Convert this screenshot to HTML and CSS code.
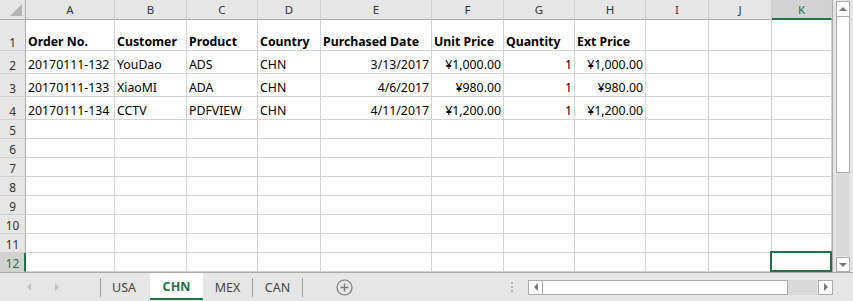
FILE: index.html
```html
<!DOCTYPE html>
<html>
<head>
<meta charset="utf-8">
<link rel="stylesheet" href="styles.css">
</head>
<body>
<div class="app">
  <div class="main">
    <div class="sheet">
      <div class="c corner"><span class="tri"></span></div>
      <div class="c ch">A</div><div class="c ch">B</div><div class="c ch">C</div><div class="c ch">D</div><div class="c ch">E</div><div class="c ch">F</div><div class="c ch">G</div><div class="c ch">H</div><div class="c ch">I</div><div class="c ch">J</div><div class="c ch sel">K</div>

      <div class="c rh">1</div>
      <div class="c b">Order No.</div><div class="c b">Customer</div><div class="c b">Product</div><div class="c b">Country</div><div class="c b">Purchased Date</div><div class="c b">Unit Price</div><div class="c b">Quantity</div><div class="c b">Ext Price</div><div class="c"></div><div class="c"></div><div class="c"></div>

      <div class="c rh">2</div>
      <div class="c">20170111-132</div><div class="c">YouDao</div><div class="c">ADS</div><div class="c">CHN</div><div class="c r">3/13/2017</div><div class="c r">¥1,000.00</div><div class="c r">1</div><div class="c r">¥1,000.00</div><div class="c"></div><div class="c"></div><div class="c"></div>

      <div class="c rh">3</div>
      <div class="c">20170111-133</div><div class="c">XiaoMI</div><div class="c">ADA</div><div class="c">CHN</div><div class="c r">4/6/2017</div><div class="c r">¥980.00</div><div class="c r">1</div><div class="c r">¥980.00</div><div class="c"></div><div class="c"></div><div class="c"></div>

      <div class="c rh">4</div>
      <div class="c">20170111-134</div><div class="c">CCTV</div><div class="c">PDFVIEW</div><div class="c">CHN</div><div class="c r">4/11/2017</div><div class="c r">¥1,200.00</div><div class="c r">1</div><div class="c r">¥1,200.00</div><div class="c"></div><div class="c"></div><div class="c"></div>

      <div class="c rh">5</div><div class="c"></div><div class="c"></div><div class="c"></div><div class="c"></div><div class="c"></div><div class="c"></div><div class="c"></div><div class="c"></div><div class="c"></div><div class="c"></div><div class="c"></div>
      <div class="c rh">6</div><div class="c"></div><div class="c"></div><div class="c"></div><div class="c"></div><div class="c"></div><div class="c"></div><div class="c"></div><div class="c"></div><div class="c"></div><div class="c"></div><div class="c"></div>
      <div class="c rh">7</div><div class="c"></div><div class="c"></div><div class="c"></div><div class="c"></div><div class="c"></div><div class="c"></div><div class="c"></div><div class="c"></div><div class="c"></div><div class="c"></div><div class="c"></div>
      <div class="c rh">8</div><div class="c"></div><div class="c"></div><div class="c"></div><div class="c"></div><div class="c"></div><div class="c"></div><div class="c"></div><div class="c"></div><div class="c"></div><div class="c"></div><div class="c"></div>
      <div class="c rh">9</div><div class="c"></div><div class="c"></div><div class="c"></div><div class="c"></div><div class="c"></div><div class="c"></div><div class="c"></div><div class="c"></div><div class="c"></div><div class="c"></div><div class="c"></div>
      <div class="c rh">10</div><div class="c"></div><div class="c"></div><div class="c"></div><div class="c"></div><div class="c"></div><div class="c"></div><div class="c"></div><div class="c"></div><div class="c"></div><div class="c"></div><div class="c"></div>
      <div class="c rh">11</div><div class="c"></div><div class="c"></div><div class="c"></div><div class="c"></div><div class="c"></div><div class="c"></div><div class="c"></div><div class="c"></div><div class="c"></div><div class="c"></div><div class="c"></div>
      <div class="c rh sel">12</div><div class="c"></div><div class="c"></div><div class="c"></div><div class="c"></div><div class="c"></div><div class="c"></div><div class="c"></div><div class="c"></div><div class="c"></div><div class="c"></div><div class="c active"></div>
    </div>
    <div class="vscroll">
      <div class="sbtn up"><span class="arr-up"></span></div>
      <div class="vthumb"></div>
      <div class="vtrack"></div>
      <div class="sbtn down"><span class="arr-down"></span></div>
    </div>
  </div>
  <div class="tabbar">
    <div class="nav"><span class="arr-l"></span><span class="arr-r"></span></div>
    <div class="tabs">
      <div class="tab">USA</div>
      <div class="tab on">CHN</div>
      <div class="tab">MEX</div>
      <div class="tab last">CAN</div>
    </div>
    <div class="add">
      <svg width="17" height="17" viewBox="0 0 17 17"><circle cx="8.5" cy="8.5" r="7.5" fill="none" stroke="#7a7a7a" stroke-width="1.2"/><path d="M8.5 4.5v8M4.5 8.5h8" stroke="#7a7a7a" stroke-width="1.4"/></svg>
    </div>
    <div class="dots"><i></i><i></i><i></i></div>
    <div class="hscroll">
      <div class="hbtn"><span class="arr-hl"></span></div>
      <div class="hthumb"></div>
      <div class="htrack"></div>
      <div class="hbtn"><span class="arr-hr"></span></div>
    </div>
  </div>
</div>
</body>
</html>
```

FILE: styles.css
```css
* { box-sizing: border-box; margin: 0; padding: 0; }
html, body { width: 853px; height: 301px; overflow: hidden; background: #fff; }
body { font-family: "Noto Sans", "Open Sans", sans-serif; }

.app { width: 853px; height: 301px; display: flex; flex-direction: column; }
.main { display: flex; height: 272px; }

.sheet {
  display: grid;
  width: 832px;
  grid-template-columns: 26px 89px 72px 71px 63px 111px 72px 71px 71px 63px 63px 60px;
  grid-template-rows: 20px 31px 23px 23px 23px repeat(8, 19px);
}
.c {
  border-right: 1px solid #d4d4d4;
  border-bottom: 1px solid #d4d4d4;
  font-size: 12.3px;
  line-height: 14px;
  color: #000;
  display: flex;
  align-items: flex-end;
  padding: 0 3px 1px 2px;
  white-space: nowrap;
  overflow: visible;
  position: relative;
}
.c.b { font-weight: 700; }
.c.r { justify-content: flex-end; padding-right: 2px; }

.corner { background: #e6e6e6; border-right-color: #ababab; border-bottom-color: #ababab; padding: 0; }
.corner .tri {
  position: absolute; right: 3px; bottom: 3px;
  width: 0; height: 0;
  border-left: 12px solid transparent;
  border-bottom: 12px solid #b4b4b4;
}
.ch {
  background: #e6e6e6;
  border-right-color: #d0d0d0;
  border-bottom-color: #ababab;
  justify-content: center;
  align-items: center;
  padding: 0;
  font-size: 11.5px;
  color: #333;
}
.ch.sel { background: #d2d2d2; color: #217346; border-bottom: 2px solid #217346; padding-top: 1px; }
.rh {
  background: #e6e6e6;
  border-right-color: #ababab;
  border-bottom-color: #d0d0d0;
  justify-content: center;
  padding: 0 0 1px 0;
  font-size: 11.8px;
  color: #333;
}
.rh.sel { background: #d2d2d2; color: #217346; border-right: 2px solid #217346; padding-left: 1px; }
.c.active { border-right: none; }
.c.active::after {
  content: ""; position: absolute; left: -2px; top: -2px; right: 0; bottom: -1px;
  border: 2px solid #217346;
}

.vscroll {
  width: 21px;
  background: #e6e6e6;
  border-left: 1px solid #ababab;
  display: flex; flex-direction: column;
  padding: 1px 3px 0 3px;
}
.sbtn {
  height: 16px; background: #fff; border: 1px solid #ababab;
  display: flex; align-items: center; justify-content: center;
}
.arr-up { width: 0; height: 0; border-left: 4px solid transparent; border-right: 4px solid transparent; border-bottom: 4px solid #777; }
.arr-down { width: 0; height: 0; border-left: 4px solid transparent; border-right: 4px solid transparent; border-top: 4px solid #777; }
.vthumb { height: 156px; background: #fff; border: 1px solid #ababab; border-top: none; }
.vtrack { flex: 1; background: #dadada; margin-bottom: 1px; }
.sbtn.down { height: 15px; }

.tabbar {
  height: 29px;
  background: #e6e6e6;
  border-top: 1px solid #ababab;
  display: flex;
  align-items: stretch;
  position: relative;
}
.nav { width: 100px; display: flex; align-items: center; padding-left: 27px; gap: 24px; }
.arr-l { width: 0; height: 0; border-top: 4px solid transparent; border-bottom: 4px solid transparent; border-right: 4px solid #c2c2c2; }
.arr-r { width: 0; height: 0; border-top: 4px solid transparent; border-bottom: 4px solid transparent; border-left: 4px solid #c2c2c2; }
.tabs { display: flex; align-items: stretch; border-left: 1px solid #9c9c9c; margin: 5px 0 4px 0; }
.tab {
  font-size: 12.5px; color: #444;
  display: flex; align-items: center; justify-content: center;
  width: 50px;
  border-right: 1px solid #9c9c9c;
}
.tab:first-child { width: 49px; border-right: none; padding-right: 3px; }
.tab.on {
  width: 53px; background: #fff; color: #217346; font-weight: 700;
  border-right: none;
  margin: -5px 0 -3px 0;
  border-bottom: 2px solid #217346;
  padding-top: 1px;
}
.tab.last { width: 50px; }
.add { margin-left: 33px; display: flex; align-items: center; }
.dots { margin-left: 158px; display: flex; flex-direction: column; justify-content: center; gap: 2px; }
.dots i { display: block; width: 2px; height: 2px; background: #b8b8b8; }
.hscroll { margin-left: 15px; display: flex; align-items: center; }
.hbtn {
  width: 15px; height: 15px; background: #fff; border: 1px solid #ababab;
  display: flex; align-items: center; justify-content: center;
}
.arr-hl { width: 0; height: 0; border-top: 4px solid transparent; border-bottom: 4px solid transparent; border-right: 4px solid #777; }
.arr-hr { width: 0; height: 0; border-top: 4px solid transparent; border-bottom: 4px solid transparent; border-left: 4px solid #777; }
.hthumb { width: 245px; height: 15px; background: #fff; border: 1px solid #ababab; border-left: none; }
.htrack { width: 29px; height: 15px; background: #dadada; margin-right: 1px; }
```
